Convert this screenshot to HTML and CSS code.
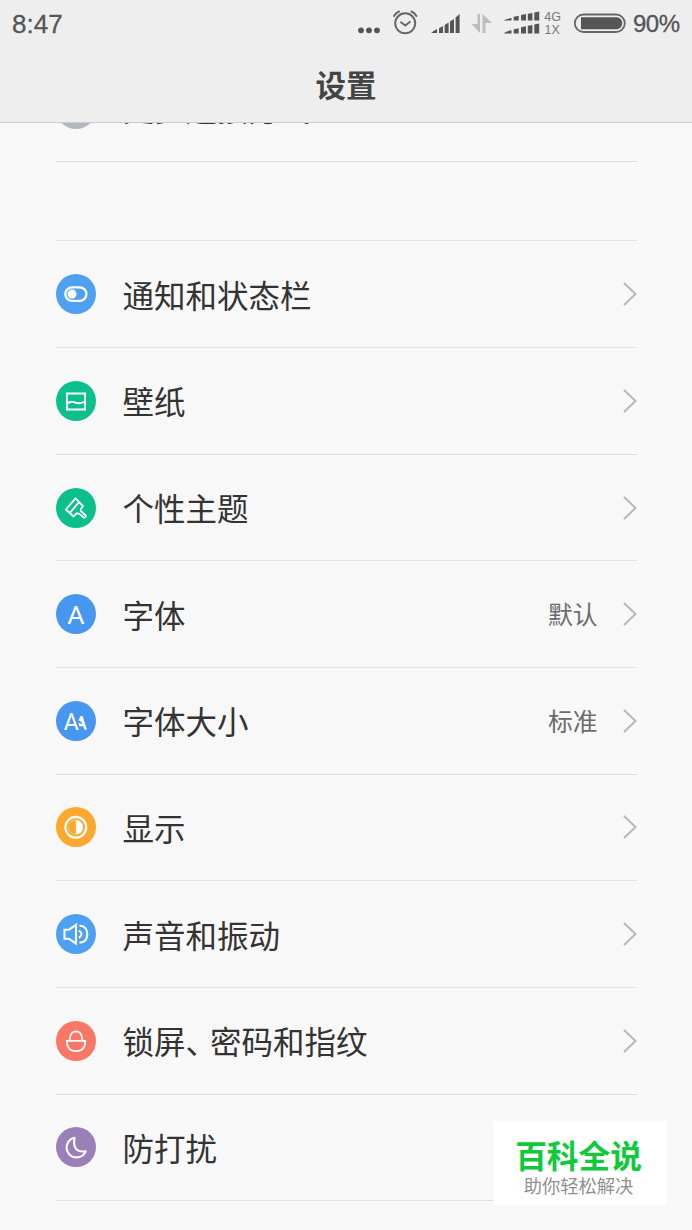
FILE: index.html
```html
<!DOCTYPE html>
<html lang="zh-CN">
<head>
<meta charset="utf-8">
<title>设置</title>
<link rel="stylesheet" href="styles.css">
</head>
<body>
<div class="screen">
  <header class="header">
    <div class="status">
      <span class="time">8:47</span>
      <svg class="indicators" width="272" height="46" viewBox="356 0 272 46">
        <g fill="#555">
          <circle cx="361" cy="30.3" r="2.9"/><circle cx="369" cy="30.3" r="2.9"/><circle cx="377" cy="30.3" r="2.9"/>
        </g>
        <g fill="none" stroke="#666" stroke-width="2" stroke-linecap="round" stroke-linejoin="round">
          <circle cx="405.2" cy="23.3" r="10"/>
          <path d="M401 22.3l4.400 3.200 4.300-3.600M394 16q1.800-3.200 5-4.500M416.400 16q-1.800-3.200-5-4.500"/>
        </g>
        <g fill="#555">
          <path d="M431 33q3-2.500 6-4v4zM439 28.300l4-2.300v7h-4zM444.600 25l4-2.500V33h-4zM450 21.500l4-2.500v14h-4zM455.600 17.500l4-3.500v19h-4z"/>
          <path d="M503.500 20.500q3-1.800 8-2.500v2.500zM513.700 16.700l5-1v4.800h-5zM521 15l5-1v6.500h-5zM527.800 13.700l4.600-.8v7.600h-4.600zM534.300 12.500l4.900-1v9h-4.900z"/>
          <path d="M503.500 33.500q3-2.500 8-3.300v3.300zM513.700 29.300l5-1v5.200h-5zM521 27.200l5-1v7.300h-5zM527.800 25.700l4.600-.8v8.600h-4.600zM534.300 24.500l4.900-1v10h-4.900z"/>
        </g>
        <path fill="#bdbdbd" d="M477.500 14h2.500v19L471.500 24h6zM482.500 33V14L492 23h-6.500v10z"/>
        <g class="network"><text x="544.200" y="20.500">4G</text><text x="544.600" y="33.800">1X</text></g>
        <rect x="574.800" y="14.500" width="50" height="17.500" rx="8.750" fill="none" stroke="#666" stroke-width="1.800"/>
        <path fill="#555" d="M581 17.300h36q5.200 1.200 5.200 6t-5.200 6h-36z"/>
      </svg>
      <span class="battery">90%</span>
    </div>
    <h1 class="title">设置</h1>
  </header>

  <main class="content">
    <section class="group group-previous">
      <div class="row"><span class="dot"></span><span class="label">更多连接方式</span></div>
    </section>
    <section class="group">
      <div class="row">
        <svg class="icon" viewBox="0 0 40 40"><circle cx="20" cy="20" r="20" fill="#4ea0f2"/><rect x="9.300" y="13.400" width="21.200" height="13.400" rx="6.700" fill="none" stroke="#fff" stroke-width="2.300"/><circle cx="16" cy="20.100" r="4.500" fill="#fff"/></svg>
        <span class="label">通知和状态栏</span><svg class="chevron" viewBox="0 0 14 24"><path d="M1 1l11.500 11L1 23"/></svg>
      </div>
      <div class="row">
        <svg class="icon" viewBox="0 0 40 40"><circle cx="20" cy="20" r="20" fill="#0cc08e"/><path d="M10.900 12.500h18.200v16H10.900zM11 22.800q4-3.300 8-1.300t10-1" fill="none" stroke="#fff" stroke-width="1.900"/></svg>
        <span class="label">壁纸</span><svg class="chevron" viewBox="0 0 14 24"><path d="M1 1l11.500 11L1 23"/></svg>
      </div>
      <div class="row">
        <svg class="icon" viewBox="0 0 40 40"><circle cx="20" cy="20" r="20" fill="#0cc08e"/><path d="M19.600 10.300L9.800 21.500l7.800 7 2.800-3.200 2.800.4 4.500 4q2.300.2 2-2.200l-4.900-4.500.2-2.300 2-2.500zM23.500 13.700L13.800 24.900" fill="none" stroke="#fff" stroke-width="1.800" stroke-linejoin="round"/></svg>
        <span class="label">个性主题</span><svg class="chevron" viewBox="0 0 14 24"><path d="M1 1l11.500 11L1 23"/></svg>
      </div>
      <div class="row">
        <svg class="icon" viewBox="0 0 40 40"><circle cx="20" cy="20" r="20" fill="#4796f0"/><text class="letter" x="19.800" y="29.800">A</text></svg>
        <span class="label">字体</span><span class="value">默认</span><svg class="chevron" viewBox="0 0 14 24"><path d="M1 1l11.500 11L1 23"/></svg>
      </div>
      <div class="row">
        <svg class="icon" viewBox="0 0 40 40"><circle cx="20" cy="20" r="20" fill="#4796f0"/><text class="letter letter-large" x="15.300" y="28.800">A</text><path d="M22.300 19.500l2.300-4.500h2L31 28.800h-2.500l-1.200-3.600h-4l-1-3 2.500-.2-.3-2zM24.800 20.500l-.5 2.600h2.300z" fill="#fff" fill-rule="evenodd"/></svg>
        <span class="label">字体大小</span><span class="value">标准</span><svg class="chevron" viewBox="0 0 14 24"><path d="M1 1l11.500 11L1 23"/></svg>
      </div>
      <div class="row">
        <svg class="icon" viewBox="0 0 40 40"><circle cx="20" cy="20" r="20" fill="#fca82e"/><circle cx="19.800" cy="20.300" r="10.400" fill="none" stroke="#fff" stroke-width="2.200"/><path d="M19.800 13a7.300 7.300 0 010 14.600z" fill="#fff"/><path d="M19.800 13a7.300 7.300 0 000 14.600" fill="none" stroke="#ffd18a" stroke-width=".7"/></svg>
        <span class="label">显示</span><svg class="chevron" viewBox="0 0 14 24"><path d="M1 1l11.500 11L1 23"/></svg>
      </div>
      <div class="row">
        <svg class="icon" viewBox="0 0 40 40"><circle cx="20" cy="20" r="20" fill="#4ea0f2"/><path d="M8.500 15.700h4.500L20 11v18.500l-7-4.700H8.500zM23 16.500q5 3.500 0 7.400M23.500 11.500q7.800 1 7.800 8.700t-7.800 8.600" fill="none" stroke="#fff" stroke-width="2.100"/></svg>
        <span class="label">声音和振动</span><svg class="chevron" viewBox="0 0 14 24"><path d="M1 1l11.500 11L1 23"/></svg>
      </div>
      <div class="row">
        <svg class="icon" viewBox="0 0 40 40"><circle cx="20" cy="20" r="20" fill="#f87766"/><path d="M10.800 19.800h18.500q0 10.400-9.200 10.400t-9.300-10.400zM13.700 19.500q.2-9.200 6.300-9.200t6.300 9.200" fill="none" stroke="#fff" stroke-width="1.700" stroke-linejoin="round"/></svg>
        <span class="label">锁屏<span class="comma">、</span>密码和指纹</span><svg class="chevron" viewBox="0 0 14 24"><path d="M1 1l11.500 11L1 23"/></svg>
      </div>
      <div class="row">
        <svg class="icon" viewBox="0 0 40 40"><circle cx="20" cy="20" r="20" fill="#9a7fb8"/><path d="M18.500 10.800a9.900 9.900 0 1011.200 13.500q-13.700 1.800-11.200-13.500z" fill="none" stroke="#fff" stroke-width="2.100" stroke-linejoin="round"/></svg>
        <span class="label">防打扰</span>
      </div>
    </section>
  </main>

  <aside class="badge"><strong class="badge-name">百科全说</strong><span class="badge-note">助你轻松解决</span></aside>
</div>
</body>
</html>
```
FILE: styles.css
```css
* { box-sizing: border-box; }

body {
  margin: 0;
  background: #f8f8f8;
  color: #333;
  font-family: "Noto Sans CJK SC", sans-serif;
}

.screen {
  position: relative;
  display: flex;
  flex-direction: column;
  width: 692px;
  height: 1230px;
  overflow: hidden;
}

.header {
  flex: none;
  height: 123px;
  background: #eee;
  border-bottom: 1px solid #ccc;
}

.status {
  display: flex;
  align-items: center;
  height: 46px;
  padding: 0 12px;
  color: #555;
  font-family: "Liberation Sans", sans-serif;
  font-size: 26px;
}

.time {
  padding-top: 2px;
  -webkit-text-stroke: .3px #555;
}

.indicators { margin-left: auto; }

.network {
  fill: #777;
  font: 12.5px "Liberation Sans", sans-serif;
}

.battery {
  width: 47px;
  margin-left: 5px;
  padding-top: 2px;
  font-size: 24px;
  letter-spacing: -.5px;
  -webkit-text-stroke: .3px #555;
}

.title {
  margin: 0;
  padding-top: 15px;
  color: #444;
  font-size: 30.5px;
  font-weight: 700;
  line-height: 46px;
  text-align: center;
}

.content {
  flex: 1;
  padding: 0 55px 0 56px;
  overflow: hidden;
}

.group { border-bottom: 1px solid #e1e1e1; }

.group-previous {
  margin-top: -68.3px;
  margin-bottom: 78px;
}

.group-previous .label { padding-bottom: 4px; }

.row {
  display: flex;
  align-items: center;
  height: 106.67px;
  border-top: 1px solid #e1e1e1;
}

.icon,
.dot {
  flex: none;
  width: 40px;
  height: 40px;
}

.dot {
  border-radius: 50%;
  background: #b0b9c2;
}

.letter {
  fill: #fff;
  font: 26.5px Roboto, sans-serif;
  text-anchor: middle;
}

.letter-large { font-size: 23px; }

.label {
  flex: 1;
  margin-left: 26.5px;
  padding-bottom: 1px;
  font-size: 31.5px;
  line-height: 44px;
}

.comma { margin-right: -7px; }

.value {
  margin-right: 25.5px;
  padding-bottom: 2px;
  color: #6c6c6c;
  font-size: 24.8px;
}

.chevron {
  flex: none;
  width: 14px;
  height: 24px;
  fill: none;
  stroke: #b8b8b8;
  stroke-width: 2;
}

.badge {
  position: absolute;
  left: 494px;
  top: 1121px;
  display: flex;
  flex-direction: column;
  align-items: center;
  width: 173px;
  height: 84px;
  padding: 14px 4px 0 0;
  background: #fff;
}

.badge-name {
  color: #0fca3b;
  font-size: 31.7px;
  font-weight: 700;
  line-height: 39px;
}

.badge-note {
  color: #909090;
  font-size: 18.3px;
  line-height: 22px;
}
```
